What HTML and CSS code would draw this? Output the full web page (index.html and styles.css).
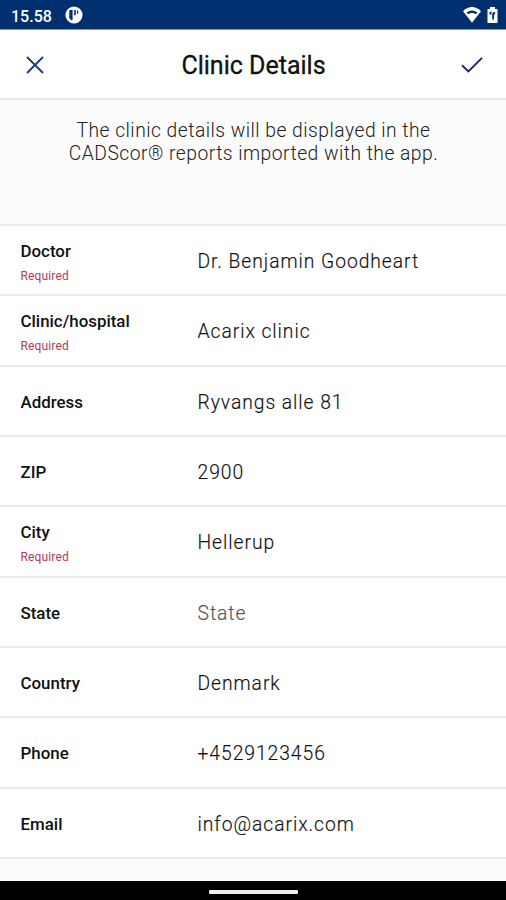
FILE: index.html
```html
<!DOCTYPE html>
<html lang="en">
<head>
<meta charset="utf-8">
<title>Clinic Details</title>
<link rel="stylesheet" href="styles.css">
</head>
<body>
<div class="status">
  <span class="time">15.58</span>
  <svg class="badge" width="18" height="18" viewBox="0 0 18 18"><circle cx="9" cy="9" r="8.6" fill="#fff"/><path d="M4.4 4h3.2v10H5.8L4.2 11.5zM9.2 4h1.6v5.2H9.2zM12 4.4h1.2v3.4H12z" fill="#002f70"/></svg>
  <svg class="wifi" width="20" height="18" viewBox="0 0 20 18"><path d="M1 5.2Q10-3.2 19 5.2L10 16.8Z" fill="#fff"/><path d="M4.6 6.6Q10 2.6 15.4 6.6L14 8.2Q10 5.6 6 8.2Z" fill="#002f70"/></svg>
  <svg class="battery" width="11" height="18" viewBox="0 0 11 18"><path d="M3 1h5v2h2.5v14H.5V3H3z" fill="#fff"/><path d="M2.6 5.8h2v2.8h-2zM6 6.2h2.6L7 9.8v3.8H5.2V8.5z" fill="#002f70"/></svg>
</div>
<header class="bar">
  <svg class="close" width="18" height="18" viewBox="0 0 18 18"><path d="M1 1L17 17M17 1L1 17" fill="none" stroke="#1d3b7c" stroke-width="1.9"/></svg>
  <h1>Clinic Details</h1>
  <svg class="check" width="22" height="18" viewBox="0 0 22 18"><path d="M1 9.3L7.4 15.5L21 1.8" fill="none" stroke="#24246b" stroke-width="1.9"/></svg>
</header>
<p class="intro">The clinic details will be displayed in the<br>CADScor® reports imported with the app.</p>
<main class="rows">
  <div class="row"><div class="label">Doctor<small>Required</small></div><div class="value">Dr. Benjamin Goodheart</div></div>
  <div class="row"><div class="label">Clinic/hospital<small>Required</small></div><div class="value">Acarix clinic</div></div>
  <div class="row"><div class="label">Address</div><div class="value">Ryvangs alle 81</div></div>
  <div class="row"><div class="label">ZIP</div><div class="value">2900</div></div>
  <div class="row"><div class="label">City<small>Required</small></div><div class="value">Hellerup</div></div>
  <div class="row"><div class="label">State</div><div class="value empty">State</div></div>
  <div class="row"><div class="label">Country</div><div class="value">Denmark</div></div>
  <div class="row"><div class="label">Phone</div><div class="value">+4529123456</div></div>
  <div class="row"><div class="label">Email</div><div class="value">info@acarix.com</div></div>
</main>
<footer class="nav"><span class="handle"></span></footer>
</body>
</html>
```
FILE: styles.css
```css
* { box-sizing: border-box; }
body {
  margin: 0;
  width: 506px;
  height: 900px;
  overflow: hidden;
  display: flex;
  flex-direction: column;
  background: #fcfcfc;
  font-family: Roboto, "Liberation Sans", sans-serif;
  color: #111;
}
.status {
  height: 30px;
  flex: none;
  display: flex;
  align-items: center;
  padding: 1px 8px 0 11px;
  background: #002f70;
  border-bottom: 1px solid #8791b8;
  color: #fff;
}
.time { width: 54px; font-size: 16px; font-weight: 500; padding-top: 2px; }
.wifi { margin-left: auto; }
.battery { margin-left: 5px; }
.bar {
  height: 70px;
  flex: none;
  display: flex;
  align-items: center;
  justify-content: space-between;
  padding: 0 23px 0 26px;
  background: #fff;
  border-bottom: 2px solid #e8e8e8;
}
h1 {
  margin: 3px 0 0 2px;
  font-size: 25px;
  font-weight: 400;
  line-height: 30px;
  -webkit-text-stroke: .3px #111;
}
.close, .check { margin-top: 2px; }
.intro {
  flex: none;
  height: 124px;
  margin: 0;
  padding: 19px 0 0 1px;
  text-align: center;
  font-size: 19.3px;
  font-weight: 300;
  line-height: 23px;
  letter-spacing: .47px;
  color: #222;
}
.rows {
  flex: none;
  height: 635px;
  display: grid;
  grid-template-rows: repeat(9, 1fr);
  background: #fff;
  border-top: 2px solid #ebebeb;
}
.row {
  display: grid;
  grid-template-columns: 177px 1fr;
  align-items: center;
  padding: 2px 0 0 20.5px;
  border-bottom: 2px solid #ebebeb;
}
.label { font-size: 16.9px; font-weight: 500; line-height: 24px; }
.label small {
  display: block;
  margin-top: 1px;
  font-size: 12px;
  font-weight: 400;
  letter-spacing: .15px;
  color: #b03a62;
}
.label:has(small) { padding-top: 4px; }
.value {
  padding-top: 1px;
  font-size: 19.3px;
  font-weight: 300;
  letter-spacing: .95px;
  color: #111;
  -webkit-text-stroke: .15px currentColor;
}
.value.empty { color: #555; }
.nav {
  height: 19px;
  margin-top: auto;
  flex: none;
  display: flex;
  align-items: center;
  justify-content: center;
  background: #000;
}
.handle { width: 89px; height: 4px; border-radius: 1px; background: #eee; margin-top: 2px; }
```
